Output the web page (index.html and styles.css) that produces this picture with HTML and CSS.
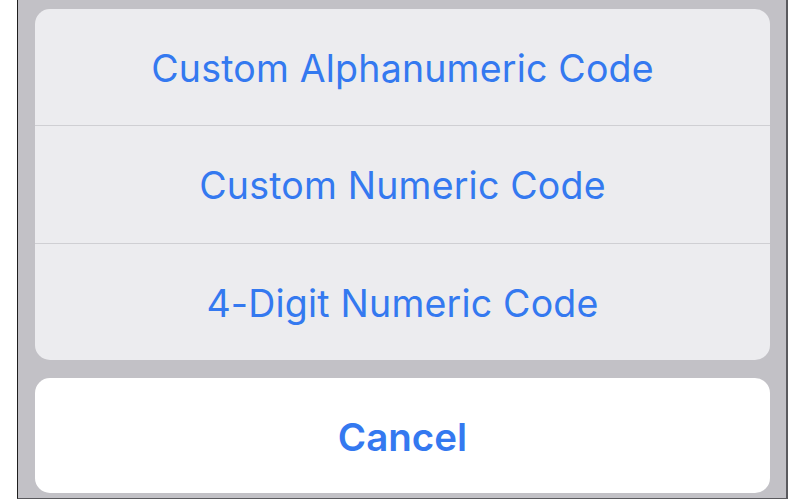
FILE: index.html
```html
<!DOCTYPE html>
<html>
  <head>
    <title>Passcode Options</title>
    <link rel="stylesheet" href="styles.css">
  </head>
  <body>
    <div class="screen">
      <!-- Options -->
      <div class="sheet">
        <div class="option">Custom Alphanumeric Code</div>
        <div class="option">Custom Numeric Code</div>
        <div class="option">4-Digit Numeric Code</div>
      </div>

      <!-- Cancel -->
      <div class="cancel">Cancel</div>
    </div>
  </body>
</html>
```

FILE: styles.css
```css
body {
  margin: 0;
  background: #fff;
  font-family: Inter, "Noto Sans", sans-serif;
}
.screen {
  box-sizing: border-box;
  margin-left: 17px;
  width: 771px;
  height: 499px;
  padding: 9px 16px 0 17px;
  background: #c2c1c6;
  border-left: 1px solid #1e1e1e;
  border-right: 2px solid #5a5a5e;
  border-bottom: 1px solid #5a5a5e;
}
.sheet {
  width: 735px;
  height: 351px;
  background: #ececef;
  border-radius: 15px;
  display: flex;
  flex-direction: column;
}
.option {
  flex: 1;
  display: flex;
  align-items: center;
  justify-content: center;
  padding-top: 3px;
  color: #3479f0;
  font-size: 37.5px;
  letter-spacing: 0.2px;
}
.option + .option {
  border-top: 1px solid #cfcfd3;
}
.cancel {
  margin-top: 18px;
  width: 735px;
  height: 115px;
  background: #fff;
  border-radius: 15px;
  display: flex;
  align-items: center;
  justify-content: center;
  padding-top: 2px;
  box-sizing: border-box;
  color: #3479f0;
  font-size: 38.5px;
  font-weight: 600;
}
```
